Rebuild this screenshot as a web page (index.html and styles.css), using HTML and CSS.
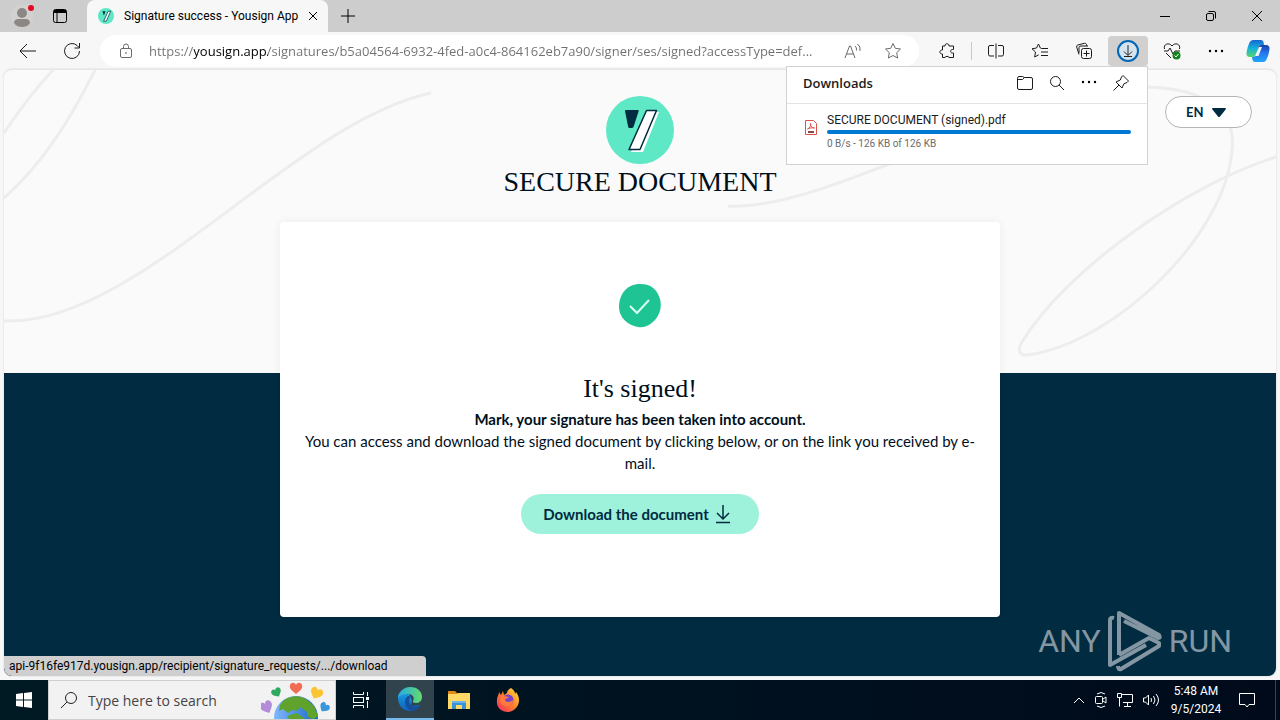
FILE: index.html
```html
<!DOCTYPE html>
<html lang="en">
<head>
    <meta charset="UTF-8">
    <meta name="viewport" content="width=device-width, initial-scale=1.0">
    <title>Signature success - Yousign App</title>
    <link rel="stylesheet" href="styles.css">
</head>
<body>
    <header class="browser">
        <div class="tabs">
            <button class="profile" aria-label="Profile">
                <svg width="24" height="24" viewBox="0 0 24 24"><circle cx="12" cy="12" r="11" fill="#d4d2d1"/><circle cx="12" cy="9" r="5" fill="#8b8784"/><path d="M4 19c0-3 2-4 4-4h8c2 0 4 1 4 4-2 3-5 4-8 4s-6-1-8-4z" fill="#8b8784"/><circle cx="21" cy="4" r="3" fill="#e00b1c"/></svg>
            </button>
            <button class="tab-actions" aria-label="Tab actions">
                <svg class="line" width="16" height="16" viewBox="0 0 16 16"><rect x="1.5" y="1.5" width="13" height="13" rx="2"/><path d="M2 3.5h12" stroke-width="3"/><path d="M5 5v9"/></svg>
            </button>
            <div class="tab">
                <svg width="16" height="16" viewBox="0 0 68 68"><circle cx="34" cy="34" r="34" fill="#5ee8c5"/><path d="M19 14h13l-7 18z" fill="#002b40"/><path d="M24 56l19-42h11L35 56z" fill="#fff" stroke="#002b40" stroke-width="3"/></svg>
                <span>Signature success - Yousign App</span>
                <button class="tab-close" aria-label="Close tab">
                    <svg class="line" width="10" height="10" viewBox="0 0 10 10"><path d="M1 1l8 8M9 1l-8 8"/></svg>
                </button>
            </div>
            <button class="new-tab" aria-label="New tab">
                <svg class="line" width="14" height="14" viewBox="0 0 14 14"><path d="M7 0v14M0 7h14"/></svg>
            </button>
            <div class="window-buttons">
                <button aria-label="Minimize"><svg class="line" width="10" height="10" viewBox="0 0 10 10"><path d="M0 5.5h10"/></svg></button>
                <button aria-label="Restore"><svg class="line" width="10" height="10" viewBox="0 0 10 10"><rect x=".5" y="2.5" width="7" height="7" rx="1.5"/><path d="M2.5 .5H8q1.5 0 1.5 1.5v5.5"/></svg></button>
                <button aria-label="Close"><svg class="line" width="10" height="10" viewBox="0 0 10 10"><path d="M0 0l10 10M10 0L0 10"/></svg></button>
            </div>
        </div>

        <div class="toolbar">
            <button aria-label="Back"><svg class="line" width="20" height="20" viewBox="0 0 20 20"><path d="M18 10H2.5M9 3l-7 7 7 7"/></svg></button>
            <button aria-label="Refresh"><svg class="line" width="20" height="20" viewBox="0 0 20 20"><path d="M17.5 10a7.5 7.5 0 1 1-2.4-5.5L17 6.5M17.5 2v5h-5"/></svg></button>
            <div class="address">
                <svg class="line" width="16" height="16" viewBox="0 0 16 16"><rect x="2.5" y="5.5" width="11" height="9" rx="1.5"/><path d="M5.5 5.5v-2a2.5 2.5 0 0 1 5 0v2"/><circle cx="8" cy="10" r=".5"/></svg>
                <input class="url" type="text" aria-label="Address" value="https://yousign.app/signatures/b5a04564-6932-4fed-a0c4-864162eb7a90/signer/ses/signed?accessType=def...">
                <button aria-label="Read aloud"><svg class="line" width="18" height="18" viewBox="0 0 18 18"><path d="M1 16L5.5 4h1L11 16M2.5 12h7M11 4q2 1.5 1.5 4.5M13.5 2q3.5 2.5 2.5 7"/></svg></button>
                <button aria-label="Favorite"><svg class="line" width="18" height="18" viewBox="0 0 18 18"><path d="M9 1.5l2.3 4.8 5.2.7-3.8 3.7.9 5.3L9 13.5 4.4 16l.9-5.3L1.5 7l5.2-.7z"/></svg></button>
            </div>
            <button aria-label="Extensions"><svg class="line" width="18" height="18" viewBox="0 0 18 18"><path d="M4.500 4H7c-.5-3 4.500-3 4 0h4.500v3.500h-1c-2.500 0-2.500 3.500 0 3.500h1v4.500H11c.2-1.500-4-1.500-4 0H4.500V12c-3.500.3-3.500-4.300 0-4z"/></svg></button>
            <span class="separator"></span>
            <button aria-label="Split screen"><svg class="line" width="18" height="18" viewBox="0 0 18 18"><path d="M7 3.500H3Q1.500 3.500 1.500 5v7.500Q1.500 14 3 14h4M11 3.500h4q1.500 0 1.500 1.500v7.500q0 1.500-1.500 1.500h-4M9 1.500v15"/></svg></button>
            <button aria-label="Favorites"><svg class="line" width="18" height="18" viewBox="0 0 18 18"><path d="M10.500 6.500L9.300 6 7.500 2 5.500 6l-4.500.8L4.500 10l-.8 5 4-2.200M10.500 6.500H17M10 10h7M10 13.500h7"/></svg></button>
            <button aria-label="Collections"><svg class="line" width="18" height="18" viewBox="0 0 18 18"><rect x="6.5" y="6.5" width="10" height="10" rx="2"/><path d="M11.500 8.500v6M8.500 11.500h6M4 12.500L1.700 5Q1.300 3.500 2.800 3L9.500 1.300q1.500-.3 2 1.200l.4 1.500M4 11V5.500q0-1.500 2-1.500h7"/></svg></button>
            <button class="active" aria-label="Downloads"><svg width="22" height="22" viewBox="0 0 22 22" fill="none"><circle cx="11" cy="11" r="10" fill="#d5e3ee" stroke="#0067b8" stroke-width="2"/><path d="M11 5v10M7 11.500l4 4 4-4M7 16.500h8" stroke="#222"/></svg></button>
            <button aria-label="Browser essentials"><svg class="line" width="18" height="18" viewBox="0 0 18 18"><path d="M1.500 7C0 2 6 0 9 4c3-4 9-2 7.500 3M1 9h4l2-3 3 6 2-3h5M3 11l5 5"/><circle cx="13.5" cy="13.5" r="4" fill="#128318" stroke="none"/><path d="M11.500 13.500l1.500 1.500 2.500-3" stroke="#fff"/></svg></button>
            <button aria-label="Settings and more"><svg width="16" height="4" viewBox="0 0 16 4"><circle cx="2" cy="2" r="1.2"/><circle cx="8" cy="2" r="1.2"/><circle cx="14" cy="2" r="1.2"/></svg></button>
            <button class="copilot" aria-label="Copilot">
                <svg width="24" height="24" viewBox="0 0 24 24">
                    <defs>
                        <linearGradient id="cp1" x2="0" y2="1"><stop offset="0" stop-color="#1764d2"/><stop offset=".5" stop-color="#16b5d8"/><stop offset="1" stop-color="#58d36b"/></linearGradient>
                        <linearGradient id="cp2" x2="0" y2="1"><stop offset="0" stop-color="#1b3fa8"/><stop offset=".5" stop-color="#2579f0"/><stop offset="1" stop-color="#1fa6f7"/></linearGradient>
                    </defs>
                    <path d="M7 1h8q2 0 2.500 2l.6 3H15q-2 0-2.600 2l-2.300 7.500Q9.500 18 7 18H4q-4 0-3.500-4.500Q1.300 8 3.500 3.500 4.500 1 7 1z" fill="url(#cp1)"/>
                    <path d="M15 6h5q4 0 3.500 4.500-.6 5-3 10Q19.500 23 17 23H9q-2 0-2.500-2L6 18h1q2.500 0 3.100-2.500L12.400 8Q13 6 15 6z" fill="url(#cp2)"/>
                    <path d="M13 8h3l-3.500 9H9z" fill="#e9f6fb"/>
                </svg>
            </button>

            <section class="downloads">
                <div class="downloads-head">
                    <h2>Downloads</h2>
                    <button aria-label="Open downloads folder"><svg class="line" width="18" height="18" viewBox="0 0 18 18"><path d="M1.500 4.500Q1.500 2.500 3 2.500h3.500l2 1H15q1.500 0 1.500 1.500v9q0 1.500-1.500 1.500H3q-1.500 0-1.500-1.500zM1.500 5.500h5l2-2"/></svg></button>
                    <button aria-label="Search downloads"><svg class="line" width="18" height="18" viewBox="0 0 18 18"><circle cx="7.5" cy="7.5" r="5"/><path d="M11 11l5 5"/></svg></button>
                    <button aria-label="More options"><svg width="16" height="6" viewBox="0 0 16 6"><circle cx="2" cy="2" r="1.2"/><circle cx="8" cy="2" r="1.2"/><circle cx="14" cy="2" r="1.2"/></svg></button>
                    <button aria-label="Pin downloads"><svg class="line" width="18" height="18" viewBox="0 0 18 18"><path d="M11 1.500L16.500 7 15 8.500l-3 1.200-2 4.300-6-6 4.300-2 1.200-3zM7 11l-5.500 5.500"/></svg></button>
                </div>
                <div class="download-item">
                    <svg width="12" height="15" viewBox="0 0 12 15" fill="none" stroke="#d9534f"><path d="M.5 .5h8l3 3v11H.5z"/><path d="M2.500 9C5 8 6 5.500 5.500 3.500 5.500 6 7 8 9.500 8 7 7.500 4.500 8 2.500 9z"/><path d="M3 12h6" stroke="#8b4a4a" stroke-width="2"/></svg>
                    <div class="download-info">
                        <div class="file-name">SECURE DOCUMENT (signed).pdf</div>
                        <div class="progress"></div>
                        <div class="file-size">0 B/s - 126 KB of 126 KB</div>
                    </div>
                </div>
            </section>
        </div>
    </header>

    <main class="page">
        <svg class="curves left" width="430" height="256" viewBox="0 0 430 256">
            <path d="M49 0C30 20 14 42 0 63M91 0C68 46 40 93 0 128M0 251C132 257 290 52 427 23"/>
        </svg>
        <svg class="curves right" width="550" height="290" viewBox="0 0 550 290">
            <path d="M2 136C100 142 300 17 415 17 490 17 510 49 506 80 500 165 390 272 302 285 293 286 291 280 296 272 340 200 460 115 550 87"/>
        </svg>

        <label class="language">
            <select aria-label="Language">
                <option>EN</option>
                <option>FR</option>
            </select>
            <svg width="14" height="9" viewBox="0 0 14 9"><path d="M1 0h12q1.500 0 .6 1.500L8 8.400q-1 1-2 0L.4 1.500Q-.5 0 1 0z" fill="#002b40"/></svg>
        </label>

        <div class="title">
            <svg width="68" height="68" viewBox="0 0 68 68"><circle cx="34" cy="34" r="34" fill="#5ee8c5"/><path d="M20 14h12q1 0 .7 1L27.500 31q-.5 1-2 1h-2q-1 0-1.300-1L19 15q0-1 1-1z" fill="#002b40"/><path d="M25 56L44 16h9L37 56z" fill="#fff"/><path d="M40.500 14.500h10L34 53.500H23z" fill="#fff" stroke="#002b40" stroke-width="1.5" stroke-linejoin="round"/></svg>
            <h1>SECURE DOCUMENT</h1>
        </div>

        <section class="card">
            <svg width="44" height="44" viewBox="0 0 44 44"><path d="M22 0C34 0 39 6 42 15c2 8 0 15-5 21-5 5-10 8-17 7C9 41 1 33 1 23 1 10 9 0 22 0z" fill="#1fc495"/><path d="M12 22l7 7 12-13" fill="none" stroke="#d9fff3" stroke-width="2"/></svg>
            <h2>It's signed!</h2>
            <p><strong>Mark, your signature has been taken into account.</strong></p>
            <p>You can access and download the signed document by clicking below, or on the link you received by e-mail.</p>
            <button class="download-button">Download the document
                <svg width="16" height="20" viewBox="0 0 16 20" fill="none" stroke="#002b40" stroke-width="1.5"><path d="M8 1v14M2 9l6 6 6-6M1 18.500h14"/></svg>
            </button>
        </section>

        <div class="status">api-9f16fe917d.yousign.app/recipient/signature_requests/.../download</div>

        <div class="watermark">
            <span>ANY</span>
            <svg width="56" height="62" viewBox="0 0 56 62" fill="none" stroke="currentColor" stroke-width="4" stroke-linejoin="round"><path d="M12 45V3l40 22q2 3-1 3L17 11"/><path d="M7 8q-4-1-4 2v45l36-20M12 45l30-17 10 5v3L14 59q-3 1-3-3"/></svg>
            <span>RUN</span>
        </div>
    </main>

    <footer class="taskbar">
        <button class="start" aria-label="Start"><svg width="16" height="16" viewBox="0 0 16 16" fill="#fff"><path d="M0 2l7-1v6.500H0zM8 1l8-1v7.500H8zM0 8.500h7V15l-7-1zM8 8.500h8V16l-8-1z"/></svg></button>
        <div class="search">
            <svg class="line" width="18" height="18" viewBox="0 0 18 18"><circle cx="11" cy="7" r="5.5"/><path d="M7 11l-6 6"/></svg>
            <input type="text" aria-label="Search" placeholder="Type here to search">
            <svg class="globe" width="74" height="38" viewBox="0 0 74 38">
                <defs>
                    <path id="heart" d="M0 5C-5 1-7-1-6-4c1-3 5-3 6 0 1-3 5-3 6 0 1 3-1 5-6 9z"/>
                    <linearGradient id="sea"><stop offset="0" stop-color="#80b8fb"/><stop offset="1" stop-color="#1968ca"/></linearGradient>
                </defs>
                <circle cx="35" cy="37" r="22" fill="url(#sea)"/>
                <path d="M23 19q12-7 22-1l8 7 4 10-4 3q-8-1-7-7l-7-5-3 4-5-1-4 3-5-4-4 2 1-6zM26 35l10-3 8 6H28z" fill="#5fa22c"/>
                <use href="#heart" x="35" y="8" fill="#f26b53"/>
                <use href="#heart" transform="translate(16 12) rotate(-30) scale(.8)" fill="#30a860"/>
                <use href="#heart" transform="translate(55 13) rotate(25)" fill="#fbc435"/>
                <use href="#heart" transform="translate(6 27) rotate(-25) scale(1 1.1)" fill="#b28bd9"/>
                <use href="#heart" transform="translate(63 27) rotate(35) scale(.8)" fill="#3995dc"/>
            </svg>
        </div>
        <button aria-label="Task view"><svg width="18" height="18" viewBox="0 0 18 18" fill="none" stroke="#fff"><path d="M1.500 1v2.500h10V1M1.500 17v-2.500h10V17M15.500 1v4M15.500 10v7"/><rect x="1.5" y="6.5" width="10" height="5"/><path d="M14 7.500h3" stroke-width="3"/></svg></button>
        <button class="running" aria-label="Microsoft Edge">
            <svg width="24" height="24" viewBox="0 0 24 24">
                <defs>
                    <linearGradient id="eg1" x2="1" y2="0"><stop offset="0" stop-color="#25a9e8"/><stop offset="1" stop-color="#65db6a"/></linearGradient>
                    <linearGradient id="eg2" x2="0" y2="1"><stop offset="0" stop-color="#1ba0e0"/><stop offset="1" stop-color="#0d63be"/></linearGradient>
                </defs>
                <path d="M0 11C0 4 6 3 10 5l4 8-1 6 9-1c-2 4-6 6-10 6C5 24 0 18 0 11z" fill="url(#eg2)"/>
                <path d="M0 11C1 4 6 0 12 0c8 0 12 5 12 10 0 4-3 6-6 6-2 0-4-.7-3-2 2-3 0-7-5-7-5 0-9 2-10 4z" fill="url(#eg1)"/>
                <path d="M10 9c-5 3-4 12 3 15 4 0 7-2 9-6-5 3-11 1-11-4 0-2 1-3 1-4s-1-1-2-1z" fill="#16509c"/>
            </svg>
        </button>
        <button aria-label="File Explorer"><svg width="22" height="20" viewBox="0 0 22 20"><path d="M0 1h7l2 2h12v4H0z" fill="#e08a1c"/><path d="M0 4h9l2-1h11v16H0z" fill="#ffd866"/><path d="M4 11h14v8h-4v-4H8v4H4z" fill="#3a91d5"/><path d="M4 11h14v2H4z" fill="#69b5eb"/></svg></button>
        <button aria-label="Firefox">
            <svg width="24" height="24" viewBox="0 0 24 24">
                <defs><linearGradient id="ff" x1="1" x2="0" y2="1"><stop offset="0" stop-color="#ffe546"/><stop offset=".45" stop-color="#ff8a27"/><stop offset="1" stop-color="#f52568"/></linearGradient></defs>
                <path d="M15 0c3 2 4 4 4 6l1-2c3 4 4 8 2 13-2 4-6 7-10 7C5 24 0 19 1 12c0-4 2-5 2-8l2 3 2-4 1 4 3-2c0-2 2-4 4-5z" fill="url(#ff)"/>
                <circle cx="12" cy="12" r="5.5" fill="#7542cc"/>
                <path d="M5 9c3-2 5 0 8 0-1 2-4 1-4 3 1 3 6 2 8 0 0 5-4 7-8 6-4-1-6-4-4-9z" fill="#ff7a3b"/>
            </svg>
        </button>
        <div class="tray">
            <svg width="12" height="8" viewBox="0 0 12 8"><path d="M1 7l5-5 5 5"/></svg>
            <svg width="12" height="18" viewBox="0 0 12 18"><rect x=".5" y="5.5" width="7" height="7" rx="1"/><path d="M8 8l3-2v6l-3-2M2 3q4-3 8 0M2 15q4 3 8 0"/></svg>
            <svg width="16" height="16" viewBox="0 0 16 16"><path d="M5 2.500h10.500v8H6M10.500 11v3M7 14.500h7M.5 1.500h4v4h-4zM2.500 6v8.500"/></svg>
            <svg width="17" height="14" viewBox="0 0 17 14"><path d="M.5 5v4h2l3 3V2l-3 3zM8 5q1 2 0 4M10.500 3q3 4 0 8M13 1q5 6 0 12"/></svg>
            <div class="clock"><time>5:48 AM</time><time>9/5/2024</time></div>
            <svg class="notice" width="18" height="18" viewBox="0 0 18 18"><path d="M1.500 2.500h15v11H11l-2 2.500-2-2.500H1.500z"/></svg>
        </div>
    </footer>
</body>
</html>
```
FILE: styles.css
```css
*{
    box-sizing: border-box;
}
html, body{
    margin: 0;
    padding: 0;
}
body{
    min-height: 100vh;
    display: flex;
    flex-direction: column;
    background: #f7f7f7;
    font-family: Roboto, sans-serif;
    font-size: 12px;
    color: #000;
}
button{
    display: flex;
    justify-content: center;
    align-items: center;
    flex-shrink: 0;
    border: 0;
    padding: 0;
    background: transparent;
    color: inherit;
    font: inherit;
    cursor: pointer;
}
svg{
    flex-shrink: 0;
}
h1, h2, p{
    margin: 0;
}
.line{
    fill: none;
    stroke: currentColor;
}

/* browser */
.tabs{
    display: flex;
    align-items: stretch;
    height: 32px;
    background: #cdcdcd;
}
.profile{
    width: 44px;
}
.tab-actions{
    width: 32px;
    margin-right: 11px;
}
.tab{
    display: flex;
    align-items: center;
    width: 241px;
    padding: 0 11px;
    gap: 10px;
    background: #f7f7f7;
    border-radius: 8px 8px 0 0;
}
.tab span{
    flex: 1;
    white-space: nowrap;
}
.tab-close{
    width: 10px;
    height: 18px;
}
.new-tab{
    width: 40px;
}
.window-buttons{
    display: flex;
    margin-left: auto;
}
.window-buttons button{
    width: 46px;
}
.toolbar{
    position: relative;
    display: flex;
    align-items: center;
    gap: 4px;
    height: 37px;
    padding: 0 4px 0 8px;
    color: #1b1b1b;
}
.toolbar > button{
    width: 40px;
    height: 30px;
    border-radius: 4px;
}
.toolbar > .active{
    background: #d2d0ce;
}
.toolbar > .copilot{
    width: 36px;
}
.separator{
    width: 1px;
    height: 18px;
    background: #c8c8c8;
}
.address{
    flex: 1;
    display: flex;
    align-items: center;
    min-width: 0;
    height: 32px;
    margin: 0 4px;
    padding: 0 6px 0 18px;
    background: #fff;
    border-radius: 16px;
    color: #6b6b6b;
}
.address button{
    width: 40px;
    height: 28px;
}
.url{
    flex: 1;
    min-width: 0;
    margin: 0 0 0 15px;
    padding: 0;
    border: 0;
    outline: 0;
    font-family: "Open Sans", sans-serif;
    font-size: 13px;
    color: transparent;
    /* host part is darker than the rest of the address */
    background: linear-gradient(90deg, #707070 45px, #000 45px, #000 119px, #707070 119px);
    -webkit-background-clip: text;
    background-clip: text;
}

/* downloads popup */
.downloads{
    position: absolute;
    z-index: 2;
    top: 34px;
    right: 132px;
    width: 362px;
    background: #fff;
    border: 1px solid #d2d2d2;
}
.downloads-head{
    display: flex;
    align-items: center;
    height: 37px;
    padding: 0 10px 4px 16px;
    border-bottom: 1px solid #e3e3e3;
}
.downloads-head h2{
    flex: 1;
    font-family: "Open Sans", sans-serif;
    font-size: 13px;
    font-weight: 600;
}
.downloads-head button{
    width: 32px;
    height: 32px;
}
.download-item{
    display: flex;
    align-items: flex-start;
    gap: 10px;
    padding: 6px 16px 12px 18px;
}
.download-item svg{
    margin-top: 10px;
}
.download-info{
    flex: 1;
}
.file-name{
    line-height: 20px;
}
.progress{
    height: 4px;
    background: #0078d4;
    border-radius: 2px;
}
.file-size{
    padding-top: 2px;
    font-size: 10px;
    line-height: 16px;
    color: #6b6b6b;
}

/* page */
.page{
    position: relative;
    flex: 1;
    display: flex;
    flex-direction: column;
    align-items: center;
    margin: 0 4px 4px;
    padding: 26px 24px 59px;
    border-top: 1px solid #e6e6e6;
    border-radius: 8px;
    overflow: hidden;
    background: linear-gradient(#fafafa 303px, #002b41 303px);
    box-shadow: 0 0 2px #ccc;
    color: #000f1c;
}
.curves{
    position: absolute;
    top: 0;
    fill: none;
    stroke: #ededed;
    stroke-width: 3;
}
.left{
    left: 0;
}
.right{
    right: 0;
}
.language{
    position: absolute;
    top: 26px;
    right: 24px;
}
.language select{
    appearance: none;
    width: 87px;
    height: 32px;
    padding: 0 20px;
    border: 1px solid #b5b5b5;
    border-radius: 16px;
    background: #fff;
    font-family: Lato, sans-serif;
    font-size: 13px;
    font-weight: bold;
    color: #002b40;
}
.language svg{
    position: absolute;
    top: 12px;
    right: 26px;
    pointer-events: none;
}
.title{
    position: relative;
    display: flex;
    flex-direction: column;
    align-items: center;
}
.title h1{
    font-family: "Liberation Serif", serif;
    font-size: 28px;
    font-weight: normal;
    line-height: 36px;
}
.card{
    position: relative;
    display: flex;
    flex-direction: column;
    align-items: center;
    width: 100%;
    max-width: 720px;
    margin-top: 22px;
    padding: 62px 24px 83px;
    background: #fff;
    border-radius: 4px;
    box-shadow: 0 0 10px rgba(0, 0, 0, 0.06);
    text-align: center;
    font-family: Lato, sans-serif;
    font-size: 15px;
    line-height: 22px;
}
.card h2{
    margin: 45px 0 3px;
    font-family: "Liberation Serif", serif;
    font-size: 26px;
    font-weight: normal;
    line-height: 32px;
}
.download-button{
    gap: 6px;
    height: 40px;
    margin-top: 20px;
    padding: 0 28px 0 22px;
    border-radius: 20px;
    background: #9ef1da;
    color: #002b40;
    font-weight: bold;
}
.status{
    position: absolute;
    left: 0;
    bottom: 0;
    width: 422px;
    padding-left: 5px;
    background: #cfcfcf;
    border-radius: 0 4px 0 8px;
    line-height: 20px;
    color: #000;
}
.watermark{
    position: absolute;
    right: 44px;
    bottom: 4px;
    display: flex;
    align-items: center;
    gap: 6px;
    font-size: 32px;
    color: #8496a2;
}

/* taskbar */
.taskbar{
    display: flex;
    gap: 1px;
    height: 40px;
    background: linear-gradient(90deg, #001a24, #000a1b);
    color: #fff;
}
.taskbar button{
    width: 48px;
}
.taskbar .start{
    width: 47px;
}
.search{
    display: flex;
    align-items: center;
    width: 288px;
    padding-left: 11px;
    background: #f2f2f2;
    border: 1px solid #cfcfcf;
    color: #222;
}
.search input{
    flex: 1;
    min-width: 0;
    padding: 0 0 0 10px;
    border: 0;
    outline: 0;
    background: transparent;
    font-family: "Open Sans", sans-serif;
    font-size: 14px;
}
.search input::placeholder{
    color: #444;
}
.taskbar .running{
    background: #31434c;
    border-bottom: 2px solid #76b9ed;
}
.tray{
    display: flex;
    align-items: center;
    gap: 10px;
    margin-left: auto;
    padding-right: 19px;
    margin-right: 4px;
    border-right: 1px solid #3b4250;
}
.tray svg{
    fill: none;
    stroke: #fff;
}
.clock{
    display: flex;
    flex-direction: column;
    align-items: center;
    width: 52px;
    line-height: 18px;
    white-space: nowrap;
}
.tray .notice{
    margin-left: 6px;
}
```
